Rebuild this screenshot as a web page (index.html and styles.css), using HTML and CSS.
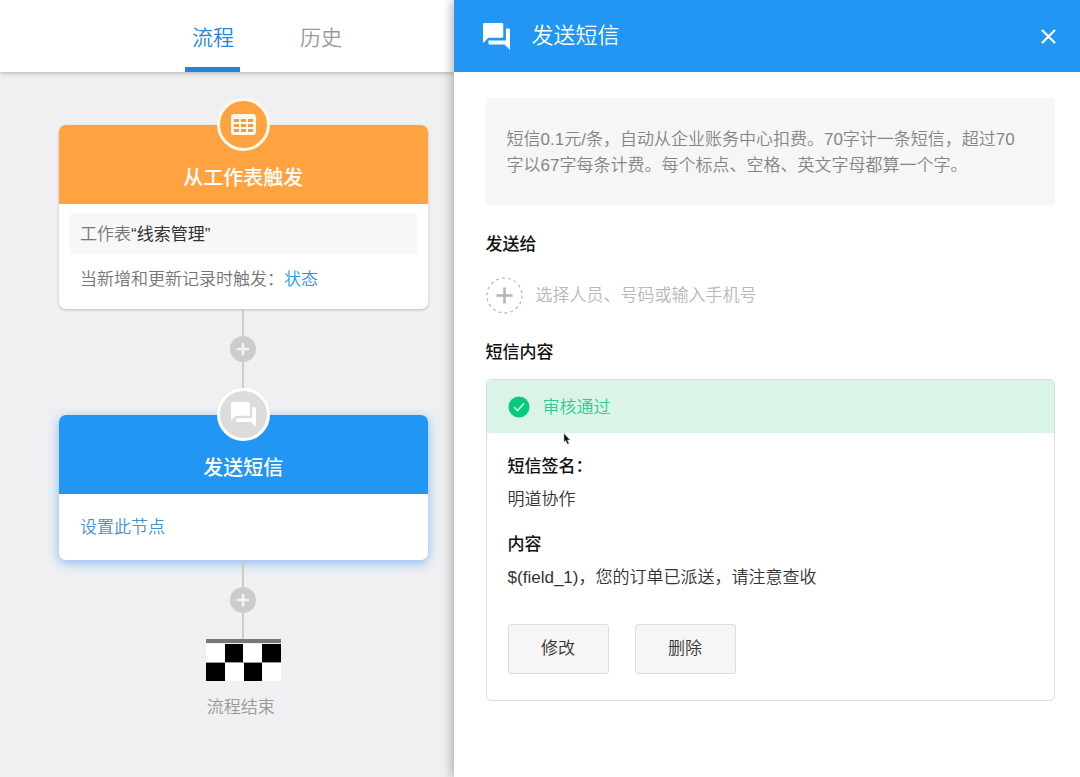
FILE: index.html
```html
<!DOCTYPE html>
<html lang="zh-CN">
<head>
<meta charset="utf-8">
<meta name="viewport" content="width=device-width, initial-scale=1">
<title>发送短信</title>
<link rel="stylesheet" href="styles.css">
</head>
<body>
<svg class="defs" aria-hidden="true">
  <symbol id="forum" viewBox="2 2 20 20">
    <path fill="currentColor" d="M21 6h-2v9H6v2c0 .55.45 1 1 1h11l4 4V7c0-.55-.45-1-1-1zm-4 6V3c0-.55-.45-1-1-1H3c-.55 0-1 .45-1 1v14l4-4h10c.55 0 1-.45 1-1z"/>
  </symbol>
  <symbol id="plus" viewBox="0 0 16 16">
    <path fill="none" stroke="currentColor" stroke-width="3" d="M8 1v14M1 8h14"/>
  </symbol>
</svg>
<div class="app">
  <div class="editor">
    <nav class="tabs">
      <a class="tab tab-active" href="#flow">流程</a>
      <a class="tab" href="#history">历史</a>
    </nav>
    <main class="flow">
      <section class="node">
        <header class="node-head node-head-trigger">
          <span class="badge badge-trigger">
            <svg width="25" height="21" viewBox="0 0 25 21" aria-hidden="true">
              <rect width="25" height="21" rx="3" fill="#fff8e8"/>
              <path fill="#ef9c45" d="M3 5h5v3H3zM10 5h5v3h-5zM17 5h5v3h-5zM3 10h5v3H3zM10 10h5v3h-5zM17 10h5v3h-5zM3 15h5v3H3zM10 15h5v3h-5zM17 15h5v3h-5z"/>
            </svg>
          </span>
          <h2 class="node-title">从工作表触发</h2>
        </header>
        <div class="node-body">
          <p class="node-source">工作表<span class="node-name">“线索管理”</span></p>
          <p class="node-line">当新增和更新记录时触发：<a class="link-bright" href="#status">状态</a></p>
        </div>
      </section>
      <div class="connector connector-node">
        <button class="add" type="button" aria-label="添加节点"><svg width="14" height="14"><use href="#plus"/></svg></button>
      </div>
      <section class="node node-selected">
        <header class="node-head node-head-sms">
          <span class="badge badge-sms"><svg width="25" height="25" aria-hidden="true"><use href="#forum"/></svg></span>
          <h2 class="node-title">发送短信</h2>
        </header>
        <div class="node-body node-body-empty">
          <p class="node-line"><a class="link" href="#setup">设置此节点</a></p>
        </div>
      </section>
      <div class="connector connector-end">
        <button class="add" type="button" aria-label="添加节点"><svg width="14" height="14"><use href="#plus"/></svg></button>
      </div>
      <div class="end">
        <svg class="flag" width="75" height="42" viewBox="0 0 75 42" aria-hidden="true">
          <path fill="#fff" d="M0 5h75v37H0z"/>
          <path fill="#777" d="M0 0h75v4H0z"/>
          <path fill="#000" d="M19 5h18v18H19zM56 5h19v18H56zM0 24h19v18H0zM38 24h18v18H38z"/>
          <path fill="none" stroke="#999" d="M0 23.500h75"/>
        </svg>
        <p class="end-label">流程结束</p>
      </div>
    </main>
  </div>
  <aside class="drawer">
    <header class="drawer-head">
      <svg class="drawer-icon" width="27" height="27" aria-hidden="true"><use href="#forum"/></svg>
      <h1 class="drawer-title">发送短信</h1>
      <button class="close" type="button" aria-label="关闭">
        <svg width="15" height="15" viewBox="0 0 15 15"><path fill="none" stroke="currentColor" stroke-width="2.200" d="M1 1l13 13M14 1L1 14"/></svg>
      </button>
    </header>
    <div class="drawer-body">
      <p class="notice">短信0.1元/条，自动从企业账务中心扣费。70字计一条短信，超过70字以67字每条计费。每个标点、空格、英文字母都算一个字。</p>
      <label class="heading" for="recipient">发送给</label>
      <div class="recipient">
        <button class="recipient-add" type="button" aria-label="添加接收人">
          <svg width="37" height="37" viewBox="0 0 37 37">
            <circle cx="18.500" cy="18.500" r="17.500" fill="none" stroke="#bbb" stroke-width="1.300" stroke-dasharray="3 3.100"/>
            <path fill="none" stroke="#b5b5b5" stroke-width="2.600" d="M18.500 10.500v16M10.500 18.500h16"/>
          </svg>
        </button>
        <input class="recipient-input" id="recipient" type="text" placeholder="选择人员、号码或输入手机号">
      </div>
      <h2 class="heading">短信内容</h2>
      <section class="message">
        <div class="status">
          <svg width="22" height="22" viewBox="0 0 22 22" aria-hidden="true">
            <circle cx="11" cy="11" r="10.500" fill="#06cb7f"/>
            <path fill="none" stroke="#d8f5e8" stroke-width="1.600" d="M6 11l3.500 3.500 6.500-7"/>
          </svg>
          <span class="status-text">审核通过</span>
          <svg class="pointer" width="8" height="12" viewBox="0 0 8 12" aria-hidden="true"><path fill="#111" stroke="#aaa" stroke-width=".5" d="M1 .5v8.500l1.800-1.600 1.700 3.700 1.500-.7-1.600-3.500H7z"/></svg>
        </div>
        <div class="message-body">
          <h3 class="field-name">短信签名：</h3>
          <p class="field-value">明道协作</p>
          <h3 class="field-name">内容</h3>
          <p class="field-value">$(field_1)，您的订单已派送，请注意查收</p>
          <div class="actions">
            <button class="action" type="button">修改</button>
            <button class="action" type="button">删除</button>
          </div>
        </div>
      </section>
    </div>
  </aside>
</div>
</body>
</html>
```
FILE: styles.css
```css
* {
  box-sizing: border-box;
}

body {
  margin: 0;
  color: #333;
  background: #f0f0f2;
  font: 350 17px/24px "Liberation Sans", "Noto Sans CJK SC", sans-serif;
}

h1, h2, h3, p {
  margin: 0;
}

a {
  color: inherit;
  text-decoration: none;
}

button, input {
  padding: 0;
  border: 0;
  background: none;
  color: inherit;
  font: inherit;
}

button {
  cursor: pointer;
}

svg {
  display: block;
}

.defs {
  position: absolute;
  width: 0;
  height: 0;
}

.app {
  display: grid;
  grid-template-columns: 42fr 58fr;
  min-height: 100vh;
}

/* Flow editor */

.tabs {
  display: flex;
  gap: 53px;
  height: 72px;
  padding-left: 185px;
  background: #fff;
  box-shadow: 0 1px 5px rgba(0, 0, 0, .28);
}

.tab {
  padding: 5px 6px 0 7px;
  border-bottom: 5px solid transparent;
  color: #999;
  font-size: 21px;
  line-height: 66px;
}

.tab-active {
  border-color: #2484d8;
  color: #2484d8;
}

.flow {
  display: flex;
  flex-direction: column;
  padding: 53px 26px 56px 59px;
}

.node {
  border-radius: 7px;
  background: #fff;
  box-shadow: 0 1px 3px rgba(0, 0, 0, .22);
}

.node-selected {
  box-shadow: 0 3px 12px rgba(33, 133, 243, .5);
}

.node-head {
  position: relative;
  height: 79px;
  padding-top: 40px;
  border-radius: 7px 7px 0 0;
  color: #fff;
  text-align: center;
}

.node-head-trigger {
  background: #ffa340;
}

.node-head-sms {
  background: #2196f3;
}

.node-title {
  font-size: 20px;
  font-weight: 500;
  line-height: 26px;
}

.badge {
  position: absolute;
  top: -27px;
  left: calc(50% - 26px);
  display: grid;
  place-items: center;
  width: 53px;
  height: 53px;
  border: 3px solid #fff;
  border-radius: 50%;
}

.badge-trigger {
  border-color: #fff8e8;
  background: #ffa340;
}

.badge-sms {
  background: #dcdcdc;
}

.node-body {
  padding: 10px 11px 17px;
}

.node-body-empty {
  padding: 22px 11px 20px;
}

.node-source {
  padding: 9px 10px 7px;
  margin-bottom: 14px;
  background: #f7f7f7;
  color: #757575;
}

.node-name {
  color: #333;
  font-weight: 400;
}

.node-line {
  padding: 0 10px;
  color: #757575;
}

.link {
  color: #4292d3;
}

.link-bright {
  color: #2196f3;
}

.connector {
  display: flex;
  justify-content: center;
  align-items: flex-start;
  padding-top: 27px;
  background: linear-gradient(#ccc, #ccc) center / 2px 100% no-repeat;
}

.connector-node {
  height: 106px;
}

.connector-end {
  height: 79px;
}

.add {
  display: grid;
  place-items: center;
  width: 26px;
  height: 26px;
  border-radius: 50%;
  background: #ccc;
  color: #f4f4f4;
}

.end {
  display: flex;
  flex-direction: column;
  align-items: center;
  gap: 15px;
  color: #999;
}

.end-label {
  padding-right: 5px;
}

/* Settings drawer */

.drawer {
  position: relative;
  background: #fff;
  box-shadow: 0 0 12px rgba(0, 0, 0, .4);
}

.drawer-head {
  display: flex;
  align-items: center;
  height: 72px;
  padding: 0 24px 0 29px;
  background: #2196f3;
  color: #fff;
}

.drawer-title {
  flex: 1;
  margin-left: 22px;
  font-size: 22px;
  font-weight: 350;
  line-height: 32px;
}

.drawer-body {
  padding: 26px 25px 27px 32px;
}

.notice {
  margin-bottom: 28px;
  padding: 29px 32px 26px 21px;
  background: #f6f6f6;
  color: #858585;
  line-height: 26px;
}

.heading {
  display: block;
  color: #111;
  font-size: 17px;
  font-weight: 500;
}

.recipient {
  display: flex;
  align-items: center;
  gap: 13px;
  margin: 20px 0 27px;
}

.recipient-input {
  flex: 1;
  height: 37px;
  outline: 0;
}

.recipient-input::placeholder {
  color: #b8b8b8;
  opacity: 1;
}

.message {
  margin-top: 14px;
  overflow: hidden;
  border: 1px solid #ddd;
  border-radius: 5px;
}

.status {
  position: relative;
  z-index: 1;
  display: flex;
  align-items: center;
  gap: 13px;
  height: 53px;
  padding-left: 21px;
  background: #daf5e8;
  color: #2dca8c;
}

.status-text {
  padding-top: 2px;
}

.pointer {
  position: absolute;
  top: 53px;
  left: 76px;
}

.message-body {
  padding: 22px 21px 26px;
}

.field-name {
  margin-bottom: 9px;
  color: #111;
  font-size: 17px;
  font-weight: 500;
}

.field-value {
  margin-bottom: 21px;
}

.actions {
  display: flex;
  gap: 26px;
  margin-top: 34px;
}

.action {
  width: 101px;
  height: 50px;
  border: 1px solid #ddd;
  border-radius: 3px;
  background: #f6f6f6;
}
```
